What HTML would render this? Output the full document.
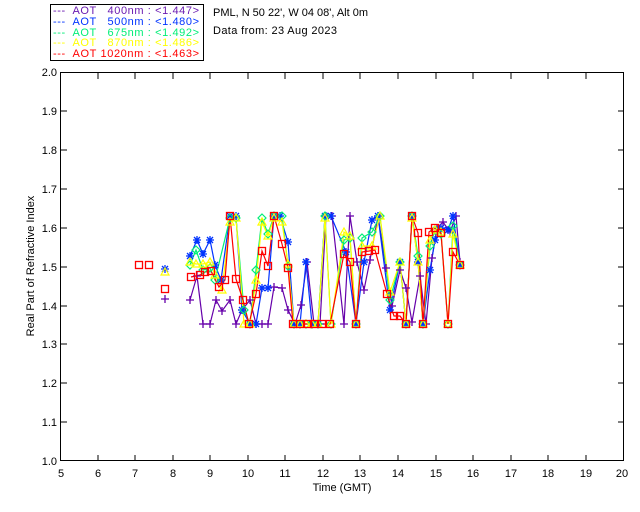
<!DOCTYPE html>
<html><head><meta charset="utf-8"><style>
html,body{margin:0;padding:0;background:#fff;}
svg{display:block;font-family:"Liberation Sans","DejaVu Sans",sans-serif;}
text{font-size:11px;white-space:pre;}
</style></head><body>
<svg width="640" height="512" viewBox="0 0 640 512" xmlns="http://www.w3.org/2000/svg">
<defs>
<symbol id="sq" viewBox="-5 -5 10 10" overflow="visible"><rect x="-3.5" y="-3.5" width="7" height="7" fill="none" stroke="#f00" stroke-width="1.3"/></symbol>
<symbol id="st" viewBox="-5 -5 10 10" overflow="visible"><path d="M-4 0H4M0-4V4M-3-3L3 3M-3 3L3-3" stroke="#0033ff" stroke-width="1.3"/></symbol>
<symbol id="di" viewBox="-5 -5 10 10" overflow="visible"><path d="M0-4L4 0L0 4L-4 0Z" fill="none" stroke="#00ee77" stroke-width="1.2"/></symbol>
<symbol id="tr" viewBox="-5 -5 10 10" overflow="visible"><path d="M0-4L4 3H-4Z" fill="none" stroke="#ffff00" stroke-width="1.2"/></symbol>
<symbol id="pl" viewBox="-5 -5 10 10" overflow="visible"><path d="M-4 0H4M0-4V4" stroke="#6600aa" stroke-width="1.3"/></symbol>
</defs>
<!-- legend -->
<rect x="50.5" y="4.5" width="153" height="56" fill="none" stroke="#000"/>
<g font-size="11" xml:space="preserve">
<text x="53" y="14" fill="#6a1ab0" textLength="146" lengthAdjust="spacing">---  AOT   400nm : &lt;1.447&gt;</text>
<text x="53" y="25" fill="#0033ff" textLength="146" lengthAdjust="spacing">---  AOT   500nm : &lt;1.480&gt;</text>
<text x="53" y="36" fill="#00ee77" textLength="146" lengthAdjust="spacing">---  AOT   675nm : &lt;1.492&gt;</text>
<text x="53" y="46" fill="#ffff00" textLength="146" lengthAdjust="spacing">---  AOT   870nm : &lt;1.486&gt;</text>
<text x="53" y="57" fill="#f00" textLength="146" lengthAdjust="spacing">---  AOT 1020nm : &lt;1.463&gt;</text>
<text x="213" y="16" fill="#000" textLength="155" lengthAdjust="spacing">PML, N 50 22', W 04 08', Alt 0m</text>
<text x="213" y="34" fill="#000" textLength="124" lengthAdjust="spacing">Data from: 23 Aug 2023</text>
</g>
<!-- axes -->
<rect x="60.5" y="72.5" width="563" height="388" fill="none" stroke="#000"/>
<g stroke="#000">
<path d="M98 461v-6M135 461v-6M173 461v-6M210 461v-6M248 461v-6M285 461v-6M323 461v-6M360 461v-6M398 461v-6M436 461v-6M473 461v-6M511 461v-6M548 461v-6M586 461v-6
M98 73v6M135 73v6M173 73v6M210 73v6M248 73v6M285 73v6M323 73v6M360 73v6M398 73v6M436 73v6M473 73v6M511 73v6M548 73v6M586 73v6
M61 422h6M61 383h6M61 344h6M61 306h6M61 267h6M61 228h6M61 189h6M61 150h6M61 111h6
M624 422h-6M624 383h-6M624 344h-6M624 306h-6M624 267h-6M624 228h-6M624 189h-6M624 150h-6M624 111h-6"/>
</g>
<g text-anchor="end" fill="#000">
<text x="57" y="465">1.0</text><text x="57" y="426">1.1</text><text x="57" y="387">1.2</text><text x="57" y="348">1.3</text><text x="57" y="310">1.4</text><text x="57" y="271">1.5</text><text x="57" y="232">1.6</text><text x="57" y="193">1.7</text><text x="57" y="154">1.8</text><text x="57" y="115">1.9</text><text x="57" y="76">2.0</text>
</g>
<g text-anchor="middle" fill="#000">
<text x="61" y="477">5</text><text x="98" y="477">6</text><text x="135" y="477">7</text><text x="173" y="477">8</text><text x="210" y="477">9</text><text x="248" y="477">10</text><text x="285" y="477">11</text><text x="323" y="477">12</text><text x="360" y="477">13</text><text x="398" y="477">14</text><text x="436" y="477">15</text><text x="473" y="477">16</text><text x="511" y="477">17</text><text x="548" y="477">18</text><text x="586" y="477">19</text><text x="622" y="477">20</text>
<text x="342" y="491">Time (GMT)</text>
<text transform="translate(34,266) rotate(-90)">Real Part of Refractive Index</text>
</g>
<!-- data lines -->
<g fill="none" stroke-width="1.2">
<polyline stroke="#6600aa" points="190,300 197,276 203,324 210,324 216,300 222,311 230,300 236,324 242,310 250,300 256,324 262,324 268,324 274,287 282,288 288,310 295,324 301,305 307,262 314,324 320,324 326,216 332,216 344,324 350,216 357,262 364,290 370,260 378,216 386,268 392,306 400,270 406,288 412,322 420,276 426,324 432,258 437,228 443,222 450,232 456,216 460,262"/>
<polyline stroke="#0033ff" points="190,256 197,240 203,254 210,240 215,265 221,280 230,216 236,216 242,310 250,324 256,324 262,288 268,288 274,216 280,216 288,242 294,324 300,324 306,262 312,324 318,324 325,216 331,216 346,252 356,324 364,262 372,220 378,216 390,310 400,262 406,324 412,216 418,262 423,324 430,270 435,240 441,228 448,230 453,216 460,265"/>
<polyline stroke="#00ee77" points="190,265 196,250 203,270 210,268 215,280 230,218 236,218 244,310 250,324 256,270 262,218 268,234 274,216 282,216 288,266 294,324 300,324 306,324 312,324 318,324 325,216 331,324 344,240 350,238 356,324 362,238 372,232 380,216 390,300 400,262 406,324 412,216 418,256 423,324 430,246 435,230 441,234 448,324 453,226 460,265"/>
<polyline stroke="#ffff00" points="190,262 196,264 203,264 210,262 215,275 222,290 230,222 236,218 244,324 250,324 256,280 262,222 268,236 274,218 282,222 288,264 294,324 300,324 306,324 312,324 318,324 325,218 331,324 344,232 350,236 356,324 362,246 372,246 380,216 390,292 400,262 406,324 412,218 418,262 423,324 430,240 435,230 441,232 448,324 453,234 460,265"/>
<polyline stroke="#f00" points="191,277 200,275 205,272 211,271 219,287 225,280 230,216 236,279 243,300 249,324 256,294 262,251 268,266 274,216 282,244 288,268 293,324 300,324 308,324 314,324 322,324 330,324 344,254 350,262 356,324 362,252 369,251 375,250 387,294 394,316 400,316 406,324 412,216 418,233 423,324 429,232 435,228 441,233 448,324 453,252 460,265"/>
</g>
<g id="m"></g>
<script>
(function(){
var sets=[
["pl","165,299 190,300 197,276 203,324 210,324 216,300 222,311 230,300 236,324 242,310 250,300 256,324 262,324 268,324 274,287 282,288 288,310 295,324 301,305 307,262 314,324 320,324 326,216 332,216 344,324 350,216 357,262 364,290 370,260 378,216 386,268 392,306 400,270 406,288 412,322 420,276 426,324 432,258 437,228 443,222 450,232 456,216 460,262"],
["st","165,269 190,256 197,240 203,254 210,240 215,265 221,280 230,216 236,216 242,310 250,324 256,324 262,288 268,288 274,216 280,216 288,242 294,324 300,324 306,262 312,324 318,324 325,216 331,216 346,252 356,324 364,262 372,220 378,216 390,310 400,262 406,324 412,216 418,262 423,324 430,270 435,240 441,228 448,230 453,216 460,265"],
["di","190,265 196,250 203,270 210,268 215,280 230,218 236,218 244,310 250,324 256,270 262,218 268,234 274,216 282,216 288,266 294,324 300,324 306,324 312,324 318,324 325,216 331,324 344,240 350,238 356,324 362,238 372,232 380,216 390,300 400,262 406,324 412,216 418,256 423,324 430,246 435,230 441,234 448,324 453,226 460,265"],
["tr","165,272 190,262 196,264 203,264 210,262 215,275 222,290 230,222 236,218 244,324 250,324 256,280 262,222 268,236 274,218 282,222 288,264 294,324 300,324 306,324 312,324 318,324 325,218 331,324 344,232 350,236 356,324 362,246 372,246 380,216 390,292 400,262 406,324 412,218 418,262 423,324 430,240 435,230 441,232 448,324 453,234 460,265"],
["sq","139,265 149,265 165,289 191,277 200,275 205,272 211,271 219,287 225,280 230,216 236,279 243,300 249,324 256,294 262,251 268,266 274,216 282,244 288,268 293,324 300,324 308,324 314,324 322,324 330,324 344,254 350,262 356,324 362,252 369,251 375,250 387,294 394,316 400,316 406,324 412,216 418,233 423,324 429,232 435,228 441,233 448,324 453,252 460,265"]];
var g=document.getElementById("m"),ns="http://www.w3.org/2000/svg";
sets.forEach(function(s){s[1].split(" ").forEach(function(p){var a=p.split(",");var u=document.createElementNS(ns,"use");u.setAttribute("href","#"+s[0]);u.setAttribute("x",a[0]-5);u.setAttribute("y",a[1]-5);u.setAttribute("width",10);u.setAttribute("height",10);g.appendChild(u);});});
})();
</script>
</svg>
</body></html>
